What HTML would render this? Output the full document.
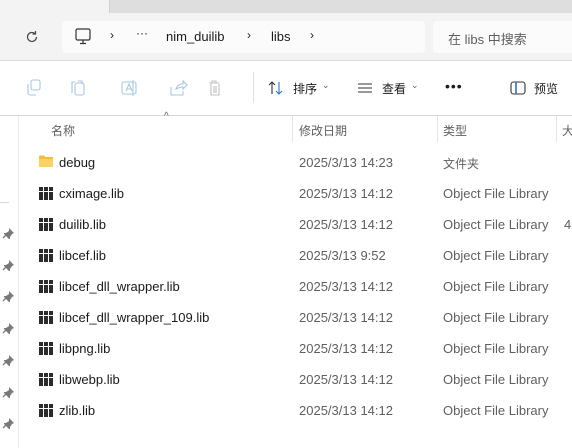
<!DOCTYPE html>
<html><head><meta charset="utf-8"><style>
*{margin:0;padding:0;box-sizing:border-box}
body{width:572px;height:448px;overflow:hidden;background:#fff;font-family:"Liberation Sans","Noto Sans CJK SC",sans-serif;position:relative;color:#1a1a1a}
.a{position:absolute}
.t{font-size:13px;white-space:nowrap}
.g{color:#5f5f5f}
.lb{position:absolute;left:39px;width:14px;height:13px;background:repeating-linear-gradient(90deg,#2b2b2b 0 4px,#fff 4px 5px)}
.lb:after{content:"";position:absolute;left:0;right:0;top:4px;height:1px;background:#fff}
.d{font-size:13px;left:299px}
</style></head><body>
<div class="a" style="left:0;top:0;width:572px;height:13px;background:#dedede"></div>
<div class="a" style="left:0;top:0;width:110px;height:13px;background:#f3f3f3;border-right:1px solid #cfcfcf"></div>
<div class="a" style="left:0;top:13px;width:572px;height:48px;background:#f3f3f3;border-bottom:1px solid #dcdcdc"></div>
<svg class="a" style="left:24px;top:29px" width="16" height="16" viewBox="0 0 16 16"><path d="M12.5 8a4.5 4.5 0 1 1-1.5-3.4M11.5 2v3h-3" fill="none" stroke="#444" stroke-width="1.2"/></svg>
<div class="a" style="left:62px;top:21px;width:363px;height:32px;background:#fbfbfb;border-radius:4px"></div>
<svg class="a" style="left:75px;top:28px" width="16" height="17" viewBox="0 0 16 17"><rect x="1" y="1" width="14" height="11" rx="1.5" fill="none" stroke="#333" stroke-width="1.2"/><path d="M5 15.5h6M8 12v3.5" stroke="#333" stroke-width="1.2"/></svg>
<div class="a t" style="left:110px;top:28px;font-size:12px">›</div>
<div class="a t" style="left:136px;top:26px;font-size:12px">···</div>
<div class="a t" style="left:166px;top:29px">nim_duilib</div>
<div class="a t" style="left:247px;top:28px;font-size:12px">›</div>
<div class="a t" style="left:271px;top:29px">libs</div>
<div class="a t" style="left:310px;top:28px;font-size:12px">›</div>
<div class="a" style="left:433px;top:21px;width:139px;height:32px;background:#fbfbfb;border-radius:4px 0 0 4px"></div>
<div class="a t g" style="left:448px;top:29px">在 libs 中搜索</div>
<svg class="a" style="left:25px;top:79px" width="200" height="18" viewBox="0 0 200 18" fill="none" stroke="#a9c6e2" stroke-width="1.1"><rect x="6" y="1" width="9" height="10" rx="2"/><path d="M3 5v9a2 2 0 0 0 2 2h6"/><rect x="50" y="4" width="9" height="12" rx="2"/><path d="M47 14V3h3M53 2h4v3"/><rect x="97" y="3" width="14" height="12" rx="2"/><path d="M101 12l3-7 3 7M102 10h4M108 1v16"/><path d="M146 8v8h12v-4M151 10c1-4 4-5 7-5V2l4 4-4 4V8c-3 0-5 1-7 2z"/><path d="M194 4h-10M187 4V2h4v2M186 5v11h8V5M189 7v7M191 7v7" stroke="#c0c0c0"/></svg>
<div class="a" style="left:253px;top:72px;width:1px;height:31px;background:#e0e0e0"></div>
<svg class="a" style="left:268px;top:80px" width="16" height="16" viewBox="0 0 16 16" fill="none" stroke-width="1.1"><path d="M4 14V2M1 5l3-3 3 3" stroke="#333"/><path d="M11 2v12M8 11l3 3 3-3" stroke="#2a77c9"/></svg>
<div class="a t" style="left:293px;top:80px;font-size:12px">排序</div>
<div class="a t g" style="left:322px;top:80px;font-size:9px">⌄</div>
<svg class="a" style="left:357px;top:82px" width="16" height="12" viewBox="0 0 16 12" stroke="#333" stroke-width="1.1"><path d="M1 2h14M1 6h14M1 10h14"/></svg>
<div class="a t" style="left:382px;top:80px;font-size:12px">查看</div>
<div class="a t g" style="left:411px;top:80px;font-size:9px">⌄</div>
<div class="a t" style="left:445px;top:78px;font-size:14px;letter-spacing:1px">•••</div>
<svg class="a" style="left:510px;top:81px" width="16" height="14" viewBox="0 0 16 14" fill="none" stroke="#333" stroke-width="1.1"><rect x="1" y="1" width="14" height="12" rx="2.5"/><path d="M6 1v12" stroke="#2a77c9" stroke-width="1.6"/></svg>
<div class="a t" style="left:534px;top:80px;font-size:12px">预览</div>
<div class="a" style="left:0;top:115px;width:572px;height:1px;background:#d8d8d8"></div>
<div class="a" style="left:18px;top:116px;width:1px;height:332px;background:#ececec"></div>
<div class="a" style="left:0;top:202px;width:9px;height:1px;background:#d8d8d8"></div>
<div class="a t g" style="left:164px;top:111px;font-size:10px">^</div>
<div class="a t g" style="left:51px;top:122px;font-size:12px">名称</div>
<div class="a" style="left:292px;top:116px;width:1px;height:26px;background:#e5e5e5"></div>
<div class="a t g" style="left:299px;top:122px;font-size:12px">修改日期</div>
<div class="a" style="left:437px;top:116px;width:1px;height:26px;background:#e5e5e5"></div>
<div class="a t g" style="left:443px;top:122px;font-size:12px">类型</div>
<div class="a" style="left:556px;top:116px;width:1px;height:26px;background:#e5e5e5"></div>
<div class="a t g" style="left:562px;top:122px;font-size:12px">大</div>
<svg class="a" style="left:2px;top:226px" width="14" height="210" viewBox="0 0 14 210" fill="#7a7a7a">
<g id="p"><path d="M7 2l5 5-2 1-2 3 0 2-1 0-5-5 0-1 2 0 3-2z"/><path d="M4 9l-3 3" stroke="#7a7a7a" stroke-width="1.3"/></g>
<use href="#p" y="32"/><use href="#p" y="63"/><use href="#p" y="95"/><use href="#p" y="127"/><use href="#p" y="159"/><use href="#p" y="190"/>
</svg>
<svg class="a" style="left:38px;top:154px" width="16" height="14" viewBox="0 0 16 14"><path d="M1 2.5a1 1 0 0 1 1-1h4l1.5 1.5H14a1 1 0 0 1 1 1V12a1 1 0 0 1-1 1H2a1 1 0 0 1-1-1z" fill="#f5bc3c"/><path d="M1 5h14v7a1 1 0 0 1-1 1H2a1 1 0 0 1-1-1z" fill="#fcd262"/></svg>
<div class="a t" style="left:59px;top:155px">debug</div>
<div class="a t g d" style="top:155px">2025/3/13 14:23</div>
<div class="a t g" style="left:443px;top:155px;font-size:12px">文件夹</div>
<div class="lb" style="top:187px"></div><div class="a t" style="left:59px;top:186px">cximage.lib</div><div class="a t g d" style="top:186px">2025/3/13 14:12</div><div class="a t g" style="left:443px;top:186px">Object File Library</div>
<div class="lb" style="top:218px"></div><div class="a t" style="left:59px;top:217px">duilib.lib</div><div class="a t g d" style="top:217px">2025/3/13 14:12</div><div class="a t g" style="left:443px;top:217px">Object File Library</div><div class="a t g" style="left:564px;top:217px">4</div>
<div class="lb" style="top:249px"></div><div class="a t" style="left:59px;top:248px">libcef.lib</div><div class="a t g d" style="top:248px">2025/3/13 9:52</div><div class="a t g" style="left:443px;top:248px">Object File Library</div>
<div class="lb" style="top:280px"></div><div class="a t" style="left:59px;top:279px">libcef_dll_wrapper.lib</div><div class="a t g d" style="top:279px">2025/3/13 14:12</div><div class="a t g" style="left:443px;top:279px">Object File Library</div>
<div class="lb" style="top:311px"></div><div class="a t" style="left:59px;top:310px">libcef_dll_wrapper_109.lib</div><div class="a t g d" style="top:310px">2025/3/13 14:12</div><div class="a t g" style="left:443px;top:310px">Object File Library</div>
<div class="lb" style="top:342px"></div><div class="a t" style="left:59px;top:341px">libpng.lib</div><div class="a t g d" style="top:341px">2025/3/13 14:12</div><div class="a t g" style="left:443px;top:341px">Object File Library</div>
<div class="lb" style="top:373px"></div><div class="a t" style="left:59px;top:372px">libwebp.lib</div><div class="a t g d" style="top:372px">2025/3/13 14:12</div><div class="a t g" style="left:443px;top:372px">Object File Library</div>
<div class="lb" style="top:404px"></div><div class="a t" style="left:59px;top:403px">zlib.lib</div><div class="a t g d" style="top:403px">2025/3/13 14:12</div><div class="a t g" style="left:443px;top:403px">Object File Library</div>
</body></html>
